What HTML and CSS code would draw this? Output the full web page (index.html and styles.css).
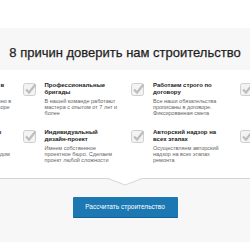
FILE: index.html
```html
<!DOCTYPE html>
<html lang="ru">
<head>
<meta charset="utf-8">
<title>8 причин</title>
<link rel="stylesheet" href="styles.css">
</head>
<body>
<div class="top"></div>
<section class="reasons">
  <h2 class="title">8 причин доверить нам строительство</h2>
  <div class="panel">
    <div class="grid">
      <div class="item">
        <svg class="check" viewBox="0 0 14 14" width="14" height="14"><rect x="0.5" y="1.5" width="12" height="12" rx="2" fill="#f3f3f3" stroke="#cfcfcf"/><path d="M3 7.5 L6 10.5 L12.5 2.5" fill="none" stroke="#bdbdbd" stroke-width="2.2"/></svg>
        <div class="text">
          <h3 class="head">Сдача объекта точно в<br>срок</h3>
          <p class="desc">Работы выполняются точно в<br>сроки, указанные в договоре</p>
        </div>
      </div>
      <div class="item">
        <svg class="check" viewBox="0 0 14 14" width="14" height="14"><rect x="0.5" y="1.5" width="12" height="12" rx="2" fill="#f3f3f3" stroke="#cfcfcf"/><path d="M3 7.5 L6 10.5 L12.5 2.5" fill="none" stroke="#bdbdbd" stroke-width="2.2"/></svg>
        <div class="text">
          <h3 class="head">Профессиональные<br>бригады</h3>
          <p class="desc">В нашей команде работают<br>мастера с опытом от 7 лет и<br>более</p>
        </div>
      </div>
      <div class="item">
        <svg class="check" viewBox="0 0 14 14" width="14" height="14"><rect x="0.5" y="1.5" width="12" height="12" rx="2" fill="#f3f3f3" stroke="#cfcfcf"/><path d="M3 7.5 L6 10.5 L12.5 2.5" fill="none" stroke="#bdbdbd" stroke-width="2.2"/></svg>
        <div class="text">
          <h3 class="head">Работаем строго по<br>договору</h3>
          <p class="desc">Все наши обязательства<br>прописаны в договоре.<br>Фиксированная смета</p>
        </div>
      </div>
      <div class="item">
        <svg class="check" viewBox="0 0 14 14" width="14" height="14"><rect x="0.5" y="1.5" width="12" height="12" rx="2" fill="#f3f3f3" stroke="#cfcfcf"/><path d="M3 7.5 L6 10.5 L12.5 2.5" fill="none" stroke="#bdbdbd" stroke-width="2.2"/></svg>
        <div class="text">
          <h3 class="head">Собственное<br>производство</h3>
          <p class="desc">Все материалы изготавливаем<br>на своём заводе</p>
        </div>
      </div>
      <div class="item">
        <svg class="check" viewBox="0 0 14 14" width="14" height="14"><rect x="0.5" y="1.5" width="12" height="12" rx="2" fill="#f3f3f3" stroke="#cfcfcf"/><path d="M3 7.5 L6 10.5 L12.5 2.5" fill="none" stroke="#bdbdbd" stroke-width="2.2"/></svg>
        <div class="text">
          <h3 class="head">Гарантия на весь ваш<br>дом</h3>
          <p class="desc">Даём гарантию 5 лет<br>на каждый построенный дом</p>
        </div>
      </div>
      <div class="item">
        <svg class="check" viewBox="0 0 14 14" width="14" height="14"><rect x="0.5" y="1.5" width="12" height="12" rx="2" fill="#f3f3f3" stroke="#cfcfcf"/><path d="M3 7.5 L6 10.5 L12.5 2.5" fill="none" stroke="#bdbdbd" stroke-width="2.2"/></svg>
        <div class="text">
          <h3 class="head">Индивидуальный<br>дизайн-проект</h3>
          <p class="desc">Имеем собственное<br>проектное бюро. Сделаем<br>проект любой сложности</p>
        </div>
      </div>
      <div class="item">
        <svg class="check" viewBox="0 0 14 14" width="14" height="14"><rect x="0.5" y="1.5" width="12" height="12" rx="2" fill="#f3f3f3" stroke="#cfcfcf"/><path d="M3 7.5 L6 10.5 L12.5 2.5" fill="none" stroke="#bdbdbd" stroke-width="2.2"/></svg>
        <div class="text">
          <h3 class="head">Авторский надзор на<br>всех этапах</h3>
          <p class="desc">Осуществляем авторский<br>надзор на всех этапах<br>ремонта</p>
        </div>
      </div>
      <div class="item">
        <svg class="check" viewBox="0 0 14 14" width="14" height="14"><rect x="0.5" y="1.5" width="12" height="12" rx="2" fill="#f3f3f3" stroke="#cfcfcf"/><path d="M3 7.5 L6 10.5 L12.5 2.5" fill="none" stroke="#bdbdbd" stroke-width="2.2"/></svg>
        <div class="text">
          <h3 class="head">Честные<br>цены</h3>
          <p class="desc">Никаких скрытых платежей<br>и доплат</p>
        </div>
      </div>
    </div>
    <svg class="notch" width="34" height="8" viewBox="0 0 34 8"><polygon points="0,0 34,0 17,7.5" fill="#fff"/><polyline points="0,0.5 17,7 34,0.5" fill="none" stroke="#d6d6d6" stroke-width="1"/></svg>
  </div>
  <div class="actions">
    <a class="btn" href="#">Рассчитать строительство</a>
  </div>
</section>
</body>
</html>
```
FILE: styles.css
```css
html, body {
  margin: 0;
  padding: 0;
  overflow-x: hidden;
  background: #fff;
  font-family: "Liberation Sans", Arial, sans-serif;
}
.top {
  height: 28px;
  background: #fff;
}
.reasons {
  background: #f7f7f7;
  padding: 17px 0 24px;
}
.title {
  margin: 0;
  text-align: center;
  font-size: 13px;
  line-height: 15px;
  font-weight: normal;
  color: #1e1e1e;
  -webkit-text-stroke: 0.25px #1e1e1e;
  white-space: nowrap;
}
.panel {
  position: relative;
  margin-top: 10px;
  background: #fff;
  border-bottom: 1px solid #d6d6d6;
  padding: 12px 0 15px;
  display: flex;
  justify-content: center;
}
.grid {
  flex: none;
  width: 434px;
  display: grid;
  grid-template-columns: repeat(4, 1fr);
  row-gap: 13px;
}
.item {
  display: flex;
  align-items: flex-start;
  gap: 8px;
  padding-left: 6px;
}
.check {
  flex: none;
  margin-top: 0;
}
.text {
  min-width: 0;
}
.head {
  margin: 0 0 2px;
  font-size: 6px;
  line-height: 7px;
  font-weight: bold;
  color: #222;
  white-space: nowrap;
}
.desc {
  margin: 0;
  font-size: 5.5px;
  line-height: 6px;
  color: #666;
  white-space: nowrap;
}
.notch {
  position: absolute;
  left: 50%;
  bottom: -8px;
  transform: translateX(-50%);
}
.actions {
  display: flex;
  justify-content: center;
  margin-top: 18px;
}
.btn {
  display: block;
  width: 105px;
  height: 21px;
  box-sizing: border-box;
  background: #1b78b3;
  border-bottom: 1px solid #14629a;
  border-radius: 1px;
  color: #fff;
  text-decoration: none;
  font-size: 6.5px;
  line-height: 20px;
  text-align: center;
}
```
